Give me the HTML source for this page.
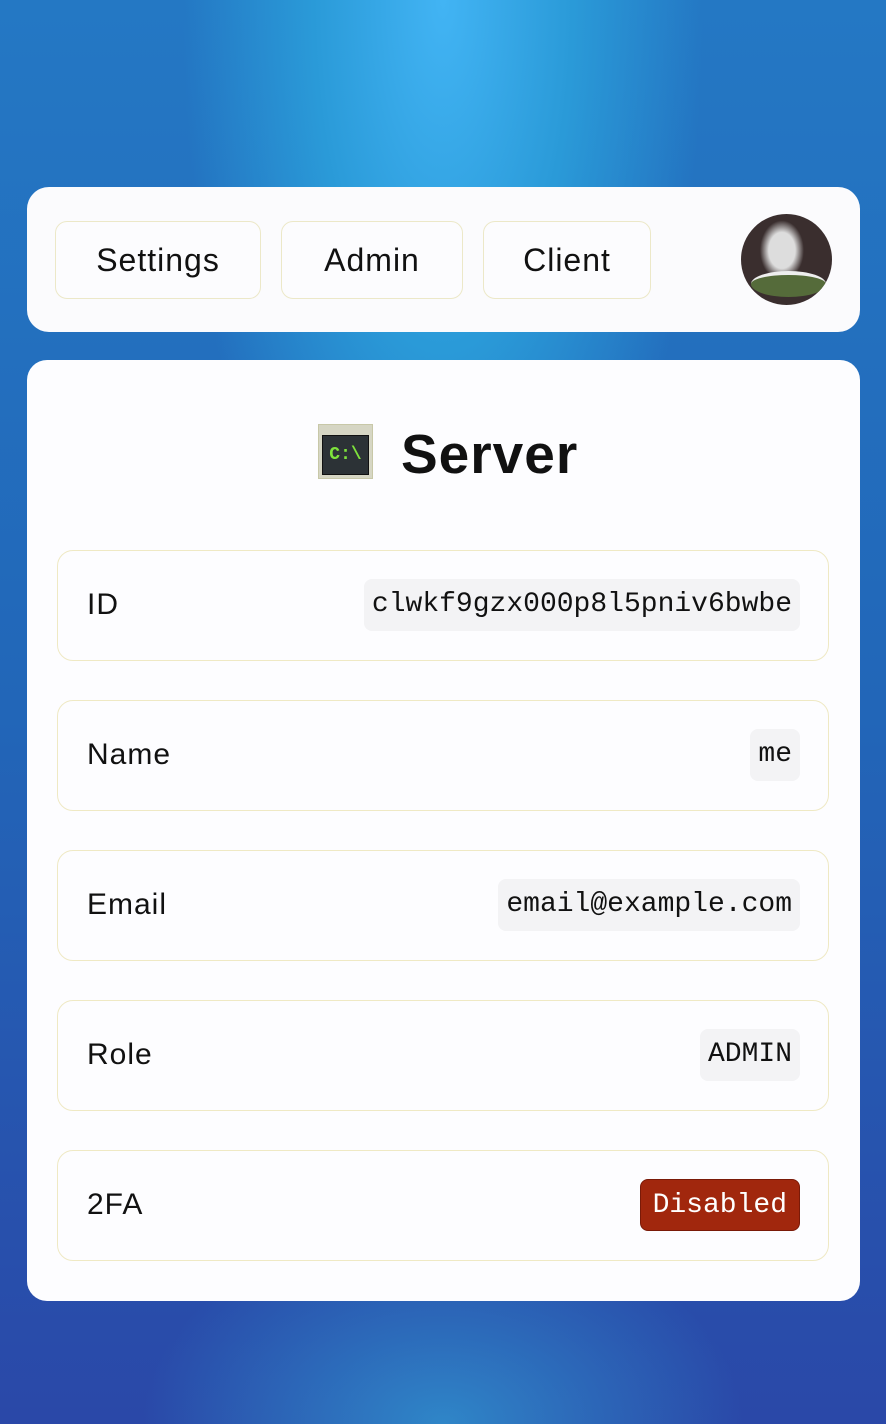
<!DOCTYPE html>
<html><head><meta charset="utf-8"><style>
*{box-sizing:border-box;margin:0;padding:0}
body{width:886px;height:1424px;overflow:hidden;font-family:"Liberation Sans",sans-serif;color:#111;
background:radial-gradient(ellipse 260px 700px at 443px 0px,#42b4f4 0%,#2a9ad8 50%,rgba(0,0,0,0) 100%),
radial-gradient(ellipse 300px 200px at 443px 1424px,#2f86c8 0%,rgba(0,0,0,0) 100%),
linear-gradient(180deg,#2478c4 0%,#2266b8 50%,#2a48a8 100%);}
.nav{position:absolute;left:27px;top:187px;width:833px;height:145px;background:#fbfbfd;border-radius:22px}
.btn{position:absolute;top:34px;height:78px;border:1.5px solid #ece8c8;border-radius:12px;background:#fcfcfe;font-size:32px;letter-spacing:1px;display:flex;align-items:center;justify-content:center}
.av{position:absolute;left:714px;top:27px;width:91px;height:91px;border-radius:50%;background:radial-gradient(ellipse 22px 30px at 45% 40%,#ddd 0 60%,#3a2e2e 100%),#2a1e1e;overflow:hidden}
.av:after{content:"";position:absolute;left:10px;bottom:8px;width:75px;height:22px;border-radius:50%;background:#556b3a;border-top:4px solid #eee}
.card{position:absolute;left:27px;top:360px;width:833px;height:941px;background:#fdfdff;border-radius:20px}
.title{position:absolute;top:422px;font-size:55px;font-weight:bold;letter-spacing:1px}
.icon{position:absolute;left:318px;top:424px;width:55px;height:55px;background:#d6d6c4;border:1px solid #c8c8a8}
.icon .s{position:absolute;left:3px;top:10px;width:47px;height:40px;background:#2c3236;border:1px solid #111;color:#7ee23c;font:bold 18px "Liberation Mono",monospace;display:flex;align-items:center;justify-content:center}
.row{position:absolute;left:57px;width:772px;height:111px;border:1.5px solid #efe9c4;border-radius:16px;background:#fdfdff}
.row .l{position:absolute;left:29px;top:37px;font-size:30px;letter-spacing:1px}
.row .v{position:absolute;right:28px;top:28px;height:52px;padding:0 8px;background:#f3f3f5;border-radius:8px;font:28px "Liberation Mono",monospace;line-height:52px}
.row .d{background:#a1270d;color:#fff;border:1px solid #7a1a08;padding:0 12px}
</style></head><body>
<div class="nav">
<div class="btn" style="left:28px;width:206px">Settings</div>
<div class="btn" style="left:254px;width:182px">Admin</div>
<div class="btn" style="left:456px;width:168px">Client</div>
<div class="av"></div>
</div>
<div class="card"></div>
<div class="icon"><div class="s">C:\</div></div>
<div class="title" style="left:401px">Server</div>
<div class="row" style="top:550px"><div class="l">ID</div><div class="v">clwkf9gzx000p8l5pniv6bwbe</div></div>
<div class="row" style="top:700px"><div class="l">Name</div><div class="v">me</div></div>
<div class="row" style="top:850px"><div class="l">Email</div><div class="v">email@example.com</div></div>
<div class="row" style="top:1000px"><div class="l">Role</div><div class="v">ADMIN</div></div>
<div class="row" style="top:1150px"><div class="l">2FA</div><div class="v d">Disabled</div></div>
</body></html>
